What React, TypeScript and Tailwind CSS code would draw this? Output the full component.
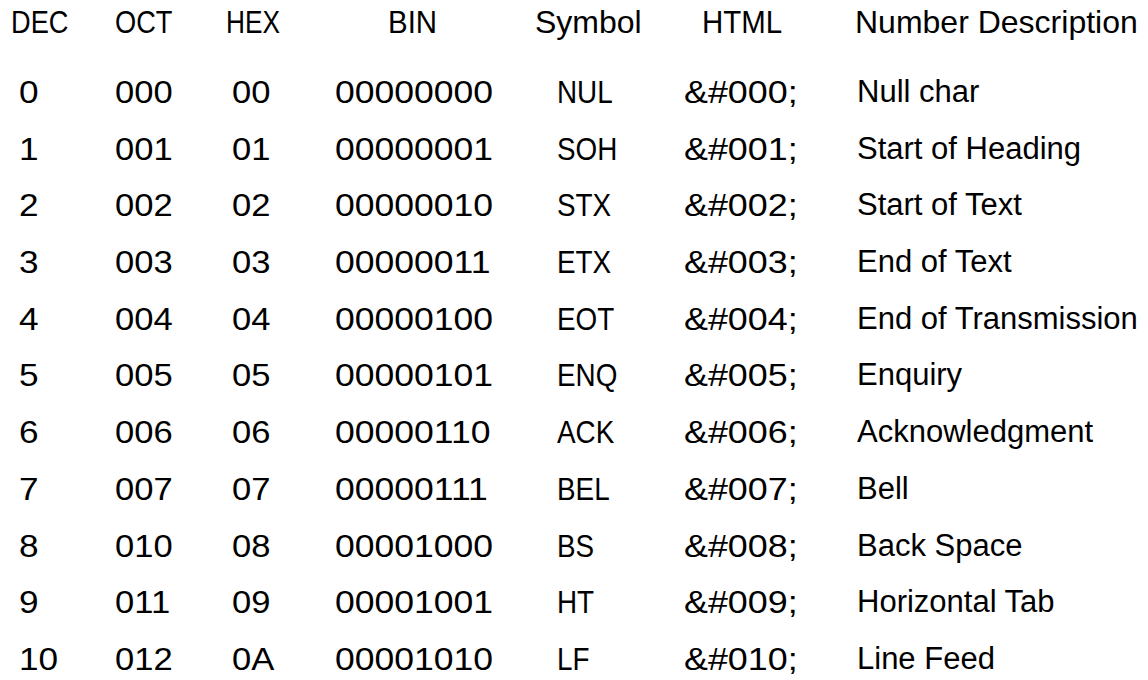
import React from "react";

const rows: [string, string, string, string, string, string, string][] = [
  ["0", "000", "00", "00000000", "NUL", "&#000;", "Null char"],
  ["1", "001", "01", "00000001", "SOH", "&#001;", "Start of Heading"],
  ["2", "002", "02", "00000010", "STX", "&#002;", "Start of Text"],
  ["3", "003", "03", "00000011", "ETX", "&#003;", "End of Text"],
  ["4", "004", "04", "00000100", "EOT", "&#004;", "End of Transmission"],
  ["5", "005", "05", "00000101", "ENQ", "&#005;", "Enquiry"],
  ["6", "006", "06", "00000110", "ACK", "&#006;", "Acknowledgment"],
  ["7", "007", "07", "00000111", "BEL", "&#007;", "Bell"],
  ["8", "010", "08", "00001000", "BS", "&#008;", "Back Space"],
  ["9", "011", "09", "00001001", "HT", "&#009;", "Horizontal Tab"],
  ["10", "012", "0A", "00001010", "LF", "&#010;", "Line Feed"],
];

const grid = "grid grid-cols-[105px_110px_105px_200px_150px_175px_1fr] whitespace-nowrap";

export default function App() {
  return (
    <div
      className="w-[1148px] h-[680px] bg-white text-black overflow-hidden"
      style={{ fontFamily: '"Liberation Sans", Arial, sans-serif' }}
    >
      <div className={`${grid} h-[45px] leading-[45px] text-[32px]`}>
        <div className="pl-[11px]"><span className="inline-block origin-left scale-x-85">DEC</span></div>
        <div className="pl-[10px]"><span className="inline-block origin-left scale-x-85">OCT</span></div>
        <div className="pl-[11px]"><span className="inline-block origin-left scale-x-82">HEX</span></div>
        <div className="pl-[68px]"><span className="inline-block origin-left scale-x-92">BIN</span></div>
        <div className="pl-[15px]"><span className="inline-block origin-left">Symbol</span></div>
        <div className="pl-[32px]"><span className="inline-block origin-left scale-x-92">HTML</span></div>
        <div className="pl-[10px]"><span className="inline-block origin-left">Number Description</span></div>
      </div>
      <div className="pt-[19px]">
        {rows.map((r) => (
          <div key={r[0]} className={`${grid} h-[56.7px] leading-[56.7px] text-[32px]`}>
            <div className="pl-[19px]"><span className="inline-block origin-left scale-x-110">{r[0]}</span></div>
            <div className="pl-[10px]"><span className="inline-block origin-left scale-x-108">{r[1]}</span></div>
            <div className="pl-[17px]"><span className="inline-block origin-left scale-x-108">{r[2]}</span></div>
            <div className="pl-[15px]"><span className="inline-block origin-left scale-x-111">{r[3]}</span></div>
            <div className="pl-[37px]"><span className="inline-block origin-left scale-x-87">{r[4]}</span></div>
            <div className="pl-[14px]"><span className="inline-block origin-left scale-x-112">{r[5]}</span></div>
            <div className="pl-[12px] text-[31px]"><span className="inline-block origin-left">{r[6]}</span></div>
          </div>
        ))}
      </div>
    </div>
  );
}
